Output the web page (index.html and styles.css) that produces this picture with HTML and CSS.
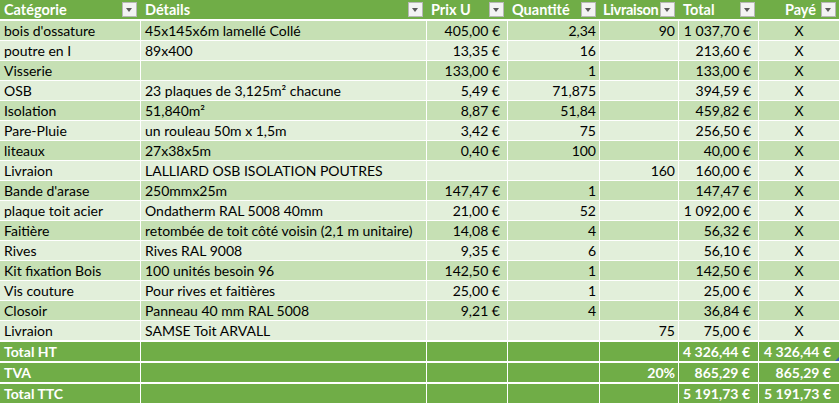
FILE: index.html
```html
<!DOCTYPE html>
<html lang="fr">
<head>
<meta charset="utf-8">
<title>Budget</title>
<link rel="stylesheet" href="styles.css">
</head>
<body>
<div class="sheet">
  <div class="row head">
    <div class="hc"><span class="lbl">Catégorie</span><span class="dd"></span></div>
    <div class="hc"><span class="lbl">Détails</span><span class="dd"></span></div>
    <div class="hc"><span class="lbl">Prix U</span><span class="dd"></span></div>
    <div class="hc"><span class="lbl">Quantité</span><span class="dd"></span></div>
    <div class="hc"><span class="lbl tight">Livraison</span><span class="dd"></span></div>
    <div class="hc"><span class="lbl">Total</span><span class="dd"></span></div>
    <div class="hc right"><span class="lbl">Payé</span><span class="dd"></span></div>
  </div>

  <div class="row odd"><div class="c">bois d'ossature</div><div class="c">45x145x6m lamellé Collé</div><div class="c cur">405,00 €</div><div class="c num">2,34</div><div class="c num">90</div><div class="c cur">1 037,70 €</div><div class="c mid">X</div></div>
  <div class="row even"><div class="c">poutre en I</div><div class="c">89x400</div><div class="c cur">13,35 €</div><div class="c num">16</div><div class="c num"></div><div class="c cur">213,60 €</div><div class="c mid">X</div></div>
  <div class="row odd"><div class="c">Visserie</div><div class="c"></div><div class="c cur">133,00 €</div><div class="c num">1</div><div class="c num"></div><div class="c cur">133,00 €</div><div class="c mid">X</div></div>
  <div class="row even"><div class="c">OSB</div><div class="c">23 plaques de 3,125m² chacune</div><div class="c cur">5,49 €</div><div class="c num">71,875</div><div class="c num"></div><div class="c cur">394,59 €</div><div class="c mid">X</div></div>
  <div class="row odd"><div class="c">Isolation</div><div class="c">51,840m²</div><div class="c cur">8,87 €</div><div class="c num">51,84</div><div class="c num"></div><div class="c cur">459,82 €</div><div class="c mid">X</div></div>
  <div class="row even"><div class="c">Pare-Pluie</div><div class="c">un rouleau 50m x 1,5m</div><div class="c cur">3,42 €</div><div class="c num">75</div><div class="c num"></div><div class="c cur">256,50 €</div><div class="c mid">X</div></div>
  <div class="row odd"><div class="c">liteaux</div><div class="c">27x38x5m</div><div class="c cur">0,40 €</div><div class="c num">100</div><div class="c num"></div><div class="c cur">40,00 €</div><div class="c mid">X</div></div>
  <div class="row even"><div class="c">Livraion</div><div class="c">LALLIARD OSB ISOLATION POUTRES</div><div class="c cur"></div><div class="c num"></div><div class="c num">160</div><div class="c cur">160,00 €</div><div class="c mid">X</div></div>
  <div class="row odd"><div class="c">Bande d'arase</div><div class="c">250mmx25m</div><div class="c cur">147,47 €</div><div class="c num">1</div><div class="c num"></div><div class="c cur">147,47 €</div><div class="c mid">X</div></div>
  <div class="row even"><div class="c">plaque toit acier</div><div class="c">Ondatherm RAL 5008 40mm</div><div class="c cur">21,00 €</div><div class="c num">52</div><div class="c num"></div><div class="c cur">1 092,00 €</div><div class="c mid">X</div></div>
  <div class="row odd"><div class="c">Faitière</div><div class="c">retombée de toit côté voisin (2,1 m unitaire)</div><div class="c cur">14,08 €</div><div class="c num">4</div><div class="c num"></div><div class="c cur">56,32 €</div><div class="c mid">X</div></div>
  <div class="row even"><div class="c">Rives</div><div class="c">Rives RAL 9008</div><div class="c cur">9,35 €</div><div class="c num">6</div><div class="c num"></div><div class="c cur">56,10 €</div><div class="c mid">X</div></div>
  <div class="row odd"><div class="c">Kit fixation Bois</div><div class="c">100 unités besoin 96</div><div class="c cur">142,50 €</div><div class="c num">1</div><div class="c num"></div><div class="c cur">142,50 €</div><div class="c mid">X</div></div>
  <div class="row even"><div class="c">Vis couture</div><div class="c">Pour rives et faitières</div><div class="c cur">25,00 €</div><div class="c num">1</div><div class="c num"></div><div class="c cur">25,00 €</div><div class="c mid">X</div></div>
  <div class="row odd"><div class="c">Closoir</div><div class="c">Panneau 40 mm RAL 5008</div><div class="c cur">9,21 €</div><div class="c num">4</div><div class="c num"></div><div class="c cur">36,84 €</div><div class="c mid">X</div></div>
  <div class="row even"><div class="c">Livraion</div><div class="c">SAMSE Toit ARVALL</div><div class="c cur"></div><div class="c num"></div><div class="c num">75</div><div class="c cur">75,00 €</div><div class="c mid">X</div></div>

  <div class="row tot first"><div class="c">Total HT</div><div class="c"></div><div class="c"></div><div class="c"></div><div class="c num"></div><div class="c tcur">4 326,44 €</div><div class="c tcur handle-cell">4 326,44 €<span class="handle"></span></div></div>
  <div class="row tot"><div class="c">TVA</div><div class="c"></div><div class="c"></div><div class="c"></div><div class="c num">20%</div><div class="c tcur">865,29 €</div><div class="c tcur">865,29 €</div></div>
  <div class="row tot"><div class="c">Total TTC</div><div class="c"></div><div class="c"></div><div class="c"></div><div class="c num"></div><div class="c tcur">5 191,73 €</div><div class="c tcur">5 191,73 €</div></div>
</div>
</body>
</html>
```
FILE: styles.css
```css
html, body {
  margin: 0;
  padding: 0;
  background: #ffffff;
}

.sheet {
  width: 839px;
  display: flex;
  flex-direction: column;
  gap: 1px;
  font-family: Lato, "Liberation Sans", sans-serif;
  font-size: 14px;
  color: #000000;
}

.row {
  display: grid;
  grid-template-columns: 140px 285px 80px 91px 78px 79px 80px;
  column-gap: 1px;
  height: 19px;
  line-height: 19px;
  background: #ffffff;
}

.row.head {
  background: #70ad47;
  height: 19px;
  margin-bottom: 1px;
}

.hc {
  display: flex;
  align-items: center;
  padding-left: 4px;
  padding-right: 3px;
  color: #ffffff;
  font-weight: bold;
  font-size: 14.5px;
  overflow: hidden;
  white-space: nowrap;
}

.hc .lbl {
  flex: 1;
  min-width: 0;
}

.hc .lbl.tight {
  letter-spacing: -0.3px;
  margin-left: -1px;
}

.hc.right .lbl {
  text-align: right;
  padding-right: 5px;
}

.dd {
  width: 13px;
  height: 13px;
  flex: none;
  border: 1px solid #b7b7b7;
  background: #f3f3f3;
  position: relative;
}

.dd::after {
  content: "";
  position: absolute;
  left: 3px;
  top: 5px;
  border-left: 3.5px solid transparent;
  border-right: 3.5px solid transparent;
  border-top: 4px solid #595959;
}

.c {
  padding: 0 4px;
  white-space: nowrap;
  overflow: hidden;
}

.odd .c { background: #c6e0b4; }
.even .c { background: #e2efda; }

.num { text-align: right; padding-right: 3px; }
.cur { text-align: right; padding-right: 7px; }
.mid { text-align: center; }

.row.tot {
  height: 19px;
  color: #ffffff;
  font-weight: bold;
}

.row.tot.first { margin-top: 1px; }
.row.tot + .row.tot { margin-top: 1px; }

.tot .c { background: #70ad47; }

.tcur { text-align: right; padding-right: 8px; }

.handle-cell { position: relative; }

.handle {
  position: absolute;
  right: 0;
  bottom: 0;
  width: 0;
  height: 0;
  border-left: 4px solid transparent;
  border-bottom: 4px solid #3b5bb5;
}
```
